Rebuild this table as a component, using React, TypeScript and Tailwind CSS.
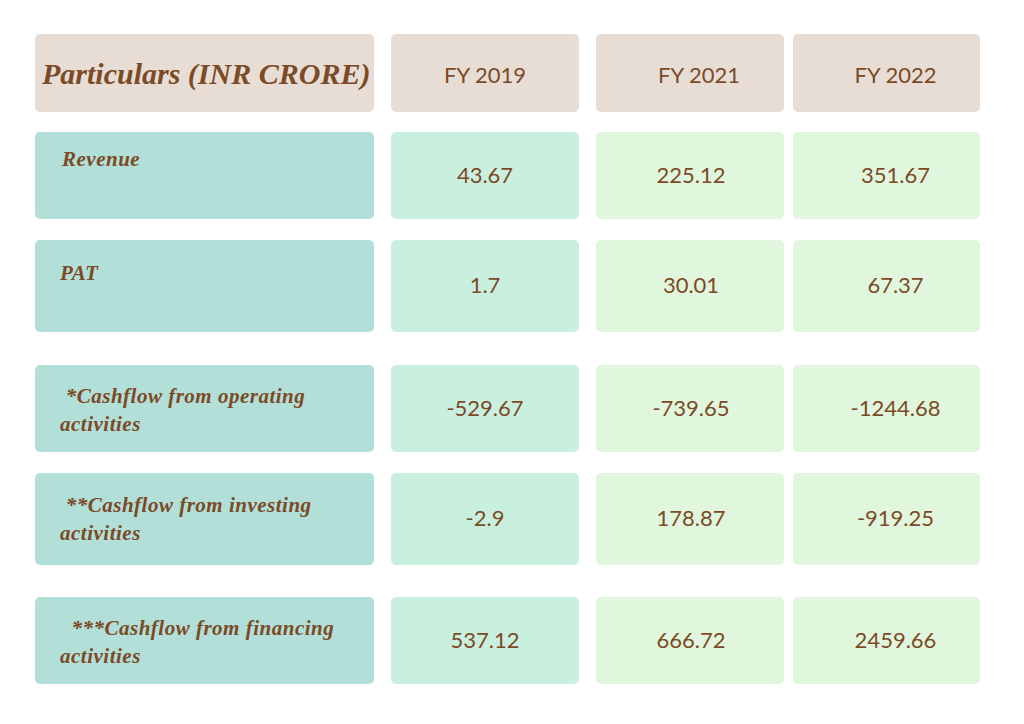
import React from 'react'

type Row = {
  label: string[]
  values: [string, string, string]
  h: string
  mt: string
  labelPad: string
}

const rows: Row[] = [
  { label: ['Revenue'], values: ['43.67', '225.12', '351.67'], h: 'h-[87px]', mt: 'mt-[20px]', labelPad: 'pt-[13px] pl-[27px]' },
  { label: ['PAT'], values: ['1.7', '30.01', '67.37'], h: 'h-[92px]', mt: 'mt-[21px]', labelPad: 'pt-[19px] pl-[25px]' },
  { label: ['\u00a0*Cashflow from operating', 'activities'], values: ['-529.67', '-739.65', '-1244.68'], h: 'h-[87px]', mt: 'mt-[33px]', labelPad: 'pt-[17px] pl-[25px]' },
  { label: ['\u00a0**Cashflow from investing', 'activities'], values: ['-2.9', '178.87', '-919.25'], h: 'h-[92px]', mt: 'mt-[21px]', labelPad: 'pt-[18px] pl-[25px]' },
  { label: ['\u00a0\u00a0***Cashflow from financing', 'activities'], values: ['537.12', '666.72', '2459.66'], h: 'h-[87px]', mt: 'mt-[32px]', labelPad: 'pt-[17px] pl-[25px]' },
]

const serif = "font-['Liberation_Serif',serif] italic font-bold"
const sans = "font-['Lato',sans-serif]"

export default function App() {
  return (
    <div className="w-[1024px] h-[724px] bg-white pt-[34px] pl-[35px] text-[#7b4a26]">
      {/* header */}
      <div className="flex h-[78px]">
        <div className={`w-[339px] rounded-[5px] bg-[#e8ddd5] flex items-center pl-[7px] text-[30px] whitespace-nowrap ${serif}`}>
          Particulars (INR CRORE)
        </div>
        <div className={`ml-[17px] w-[188px] rounded-[5px] bg-[#e8ddd5] flex items-center justify-center pt-[3px] text-[22px] ${sans}`}>
          FY 2019
        </div>
        <div className={`ml-[17px] w-[188px] rounded-[5px] bg-[#e8ddd5] flex items-center justify-center pl-[18px] pt-[3px] text-[22px] ${sans}`}>
          FY 2021
        </div>
        <div className={`ml-[9px] w-[187px] rounded-[5px] bg-[#e8ddd5] flex items-center justify-center pl-[18px] pt-[3px] text-[22px] ${sans}`}>
          FY 2022
        </div>
      </div>

      {rows.map((r) => (
        <div key={r.label[0]} className={`flex ${r.h} ${r.mt}`}>
          <div className={`w-[339px] rounded-[5px] bg-[#b2dfd8] ${r.labelPad} text-[21px] leading-[28px] tracking-[0.5px] ${serif}`}>
            {r.label.map((l) => (
              <div key={l} className="whitespace-pre">{l}</div>
            ))}
          </div>
          <div className={`ml-[17px] w-[188px] rounded-[5px] bg-[#c9f0de] flex items-center justify-center pb-[3px] text-[22px] ${sans}`}>
            {r.values[0]}
          </div>
          <div className={`ml-[17px] w-[188px] rounded-[5px] bg-[#e0f7dd] flex items-center justify-center pl-[2px] pb-[3px] text-[22px] ${sans}`}>
            {r.values[1]}
          </div>
          <div className={`ml-[9px] w-[187px] rounded-[5px] bg-[#e0f7dd] flex items-center justify-center pl-[18px] pb-[3px] text-[22px] ${sans}`}>
            {r.values[2]}
          </div>
        </div>
      ))}
    </div>
  )
}
